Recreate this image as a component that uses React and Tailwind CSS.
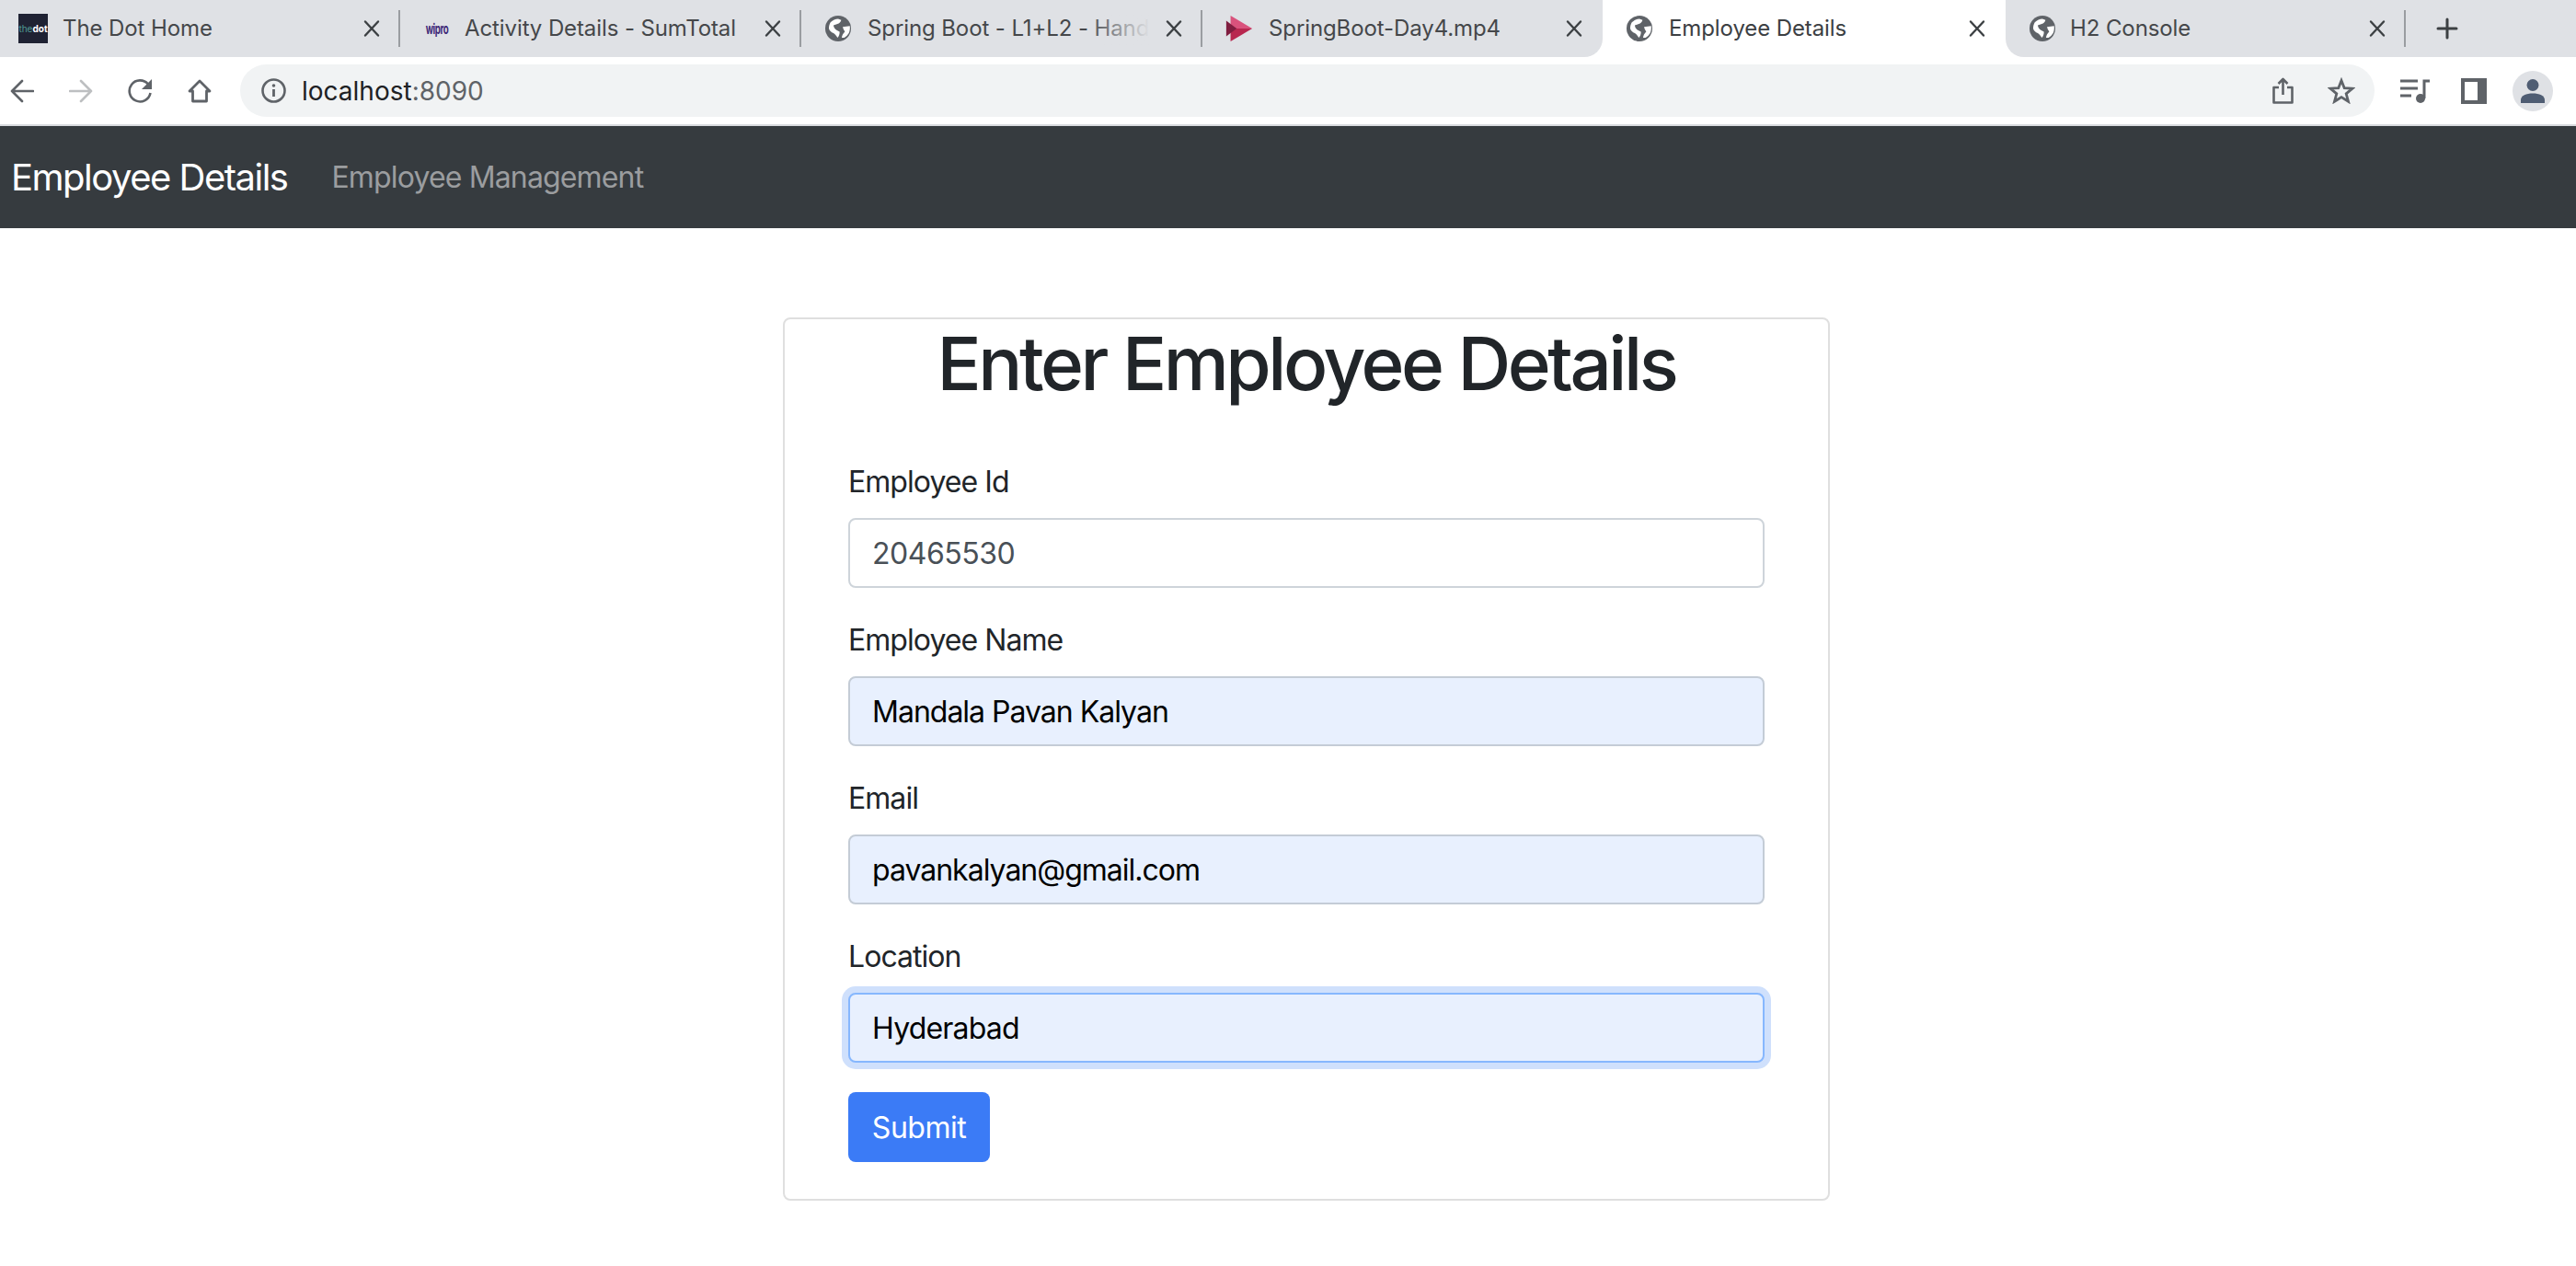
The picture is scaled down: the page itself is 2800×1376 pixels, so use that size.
import React from 'react'

const font = "font-['Inter','Liberation_Sans',sans-serif]"

function Globe() {
  return (
    <svg width="28" height="28" viewBox="0 0 24 24">
      <circle cx="12" cy="12" r="12" fill="#5f6368" />
      <path d="M4.9 6.3C7 4.2 9.5 3 12 2.9L14.9 4C14.5 6 13 7.2 11.4 7.7L7.7 9.1C7.8 11 9 12.8 10.6 13.4L13.4 14.9C13.6 17 12.8 19 11.4 20.6C10.5 18.8 9.2 17.4 7.7 16.3C5.6 15.5 4 14 3.4 12C3.4 9.8 4 8 4.9 6.3Z" fill="#fff" />
      <path d="M16.3 10.6L22.9 9.7C23.2 12 22.9 14.3 22 16.3C20.8 18.2 19.4 19.7 17.7 20.6L15.4 20.6C15.6 18.4 16.6 16.4 18.3 14.9C17.4 13.6 16.6 12.2 16.3 10.6Z" fill="#fff" />
    </svg>
  )
}

function DotIcon() {
  return (
    <div className="w-8 h-8 bg-[#1f2233] flex items-center justify-center text-[10px] leading-none font-bold">
      <span className="text-[#4f9a94] font-normal">the</span>
      <span className="text-white">dot</span>
    </div>
  )
}

function WiproIcon() {
  return (
    <div className="w-8 flex justify-center text-[#3f2a78] text-[15px] font-bold leading-none tracking-tighter scale-x-[0.65]">
      wipro
    </div>
  )
}

function StreamIcon() {
  return (
    <svg width="34" height="32" viewBox="0 0 34 32">
      <polygon points="7,1 32,16 7,16" fill="#d9527c" />
      <polygon points="7,31 32,16 7,16" fill="#b8274f" />
      <polygon points="2,7 14,16 2,25" fill="#7f1d3f" />
    </svg>
  )
}

function CloseIcon() {
  return (
    <svg width="22" height="22" viewBox="0 0 22 22" className="shrink-0" stroke="#3c4043" strokeWidth="2.4" strokeLinecap="round">
      <path d="M4 3.5L18 18.5M18 3.5L4 18.5" />
    </svg>
  )
}

function Tab({ icon, title, active, sep, fade, className, titleClass = 'ml-4' }) {
  return (
    <div className={`flex items-center h-full shrink-0 pl-6 ${active ? 'bg-white text-[#3c4043]' : 'bg-[#dfe1e5] text-[#45474a]'} ${className}`}>
      <div className="w-8 flex justify-center shrink-0">{icon}</div>
      <div className={`relative flex-1 mr-[15px] overflow-hidden whitespace-nowrap text-[24px] tracking-[-0.1px] ${titleClass}`}>
        {title}
        {fade && <div className="absolute inset-y-0 right-0 w-[70px] bg-gradient-to-r from-transparent to-[#dfe1e5]" />}
      </div>
      <CloseIcon />
      {sep ? <div className="ml-[18px] w-[2px] h-10 bg-[#9a9da1] shrink-0" /> : <div className="ml-5 w-0" />}
    </div>
  )
}

function TabStrip() {
  return (
    <div className="flex h-[62px]">
      <Tab className="w-[435px] !pl-5" icon={<DotIcon />} title="The Dot Home" sep />
      <Tab className="w-[436px]" titleClass="ml-[14px]" icon={<WiproIcon />} title="Activity Details - SumTotal" sep />
      <Tab className="w-[436px]" icon={<Globe />} title="Spring Boot - L1+L2 - Hands-on" fade sep />
      <Tab className="w-[435px] rounded-br-[20px]" icon={<StreamIcon />} title="SpringBoot-Day4.mp4" />
      <Tab className="w-[438px] rounded-t-[20px]" icon={<Globe />} title="Employee Details" active />
      <Tab className="w-[435px] rounded-bl-[20px]" titleClass="ml-[14px]" icon={<Globe />} title="H2 Console" sep />
      <div className="flex-1 bg-[#dfe1e5] flex items-center pl-[33px]">
        <svg width="24" height="24" viewBox="0 0 24 24" stroke="#3c4043" strokeWidth="3" strokeLinecap="round">
          <path d="M12 2V22M2 12H22" />
        </svg>
      </div>
    </div>
  )
}

function Toolbar() {
  return (
    <div className="flex items-center h-[73px] pl-[11px] border-b-2 border-[#dadce0] box-content">
      <div className="flex items-center gap-[38px]">
        <svg width="26" height="26" viewBox="0 0 26 26" fill="none" stroke="#5f6368" strokeWidth="2.6" strokeLinecap="round" strokeLinejoin="round">
          <path d="M25 13H2M13 2L2 13L13 24" />
        </svg>
        <svg width="26" height="26" viewBox="0 0 26 26" fill="none" stroke="#bdbfc1" strokeWidth="2.6" strokeLinecap="round" strokeLinejoin="round">
          <path d="M1 13H24M13 2L24 13L13 24" />
        </svg>
        <svg width="27" height="26" viewBox="0 0 27 26" fill="none">
          <path d="M22 5.5A11.5 11.5 0 1 0 24.5 15" stroke="#5f6368" strokeWidth="2.6" />
          <path d="M26 0V11H15Z" fill="#5f6368" />
        </svg>
        <svg width="26" height="26" viewBox="0 0 26 26" fill="none" stroke="#5f6368" strokeWidth="2.8" strokeLinejoin="round">
          <path d="M13 2L24 13H20.5V24H5.5V13H2Z" />
        </svg>
      </div>
      <div className="ml-[31px] w-[2320px] h-[57px] rounded-full bg-[#f1f3f4] flex items-center pl-[23px] pr-[21px]">
        <svg width="27" height="27" viewBox="0 0 27 27" fill="none">
          <circle cx="13.5" cy="13.5" r="12" stroke="#5f6368" strokeWidth="2.6" />
          <path d="M13.5 12V20" stroke="#5f6368" strokeWidth="2.8" />
          <circle cx="13.5" cy="8" r="1.8" fill="#5f6368" />
        </svg>
        <div className="ml-[17px] text-[28px] text-[#202124]">
          localhost<span className="text-[#5f6368]">:8090</span>
        </div>
        <div className="ml-auto flex items-center gap-[37px]">
          <svg width="23" height="29" viewBox="0 0 23 29" fill="none" stroke="#5f6368" strokeWidth="2.6" strokeLinejoin="round">
            <path d="M7 11H1.5V27.5H21.5V11H16" />
            <path d="M11.5 19V2M6.5 7L11.5 2L16.5 7" />
          </svg>
          <svg width="30" height="29" viewBox="0 0 30 29" fill="none" stroke="#5f6368" strokeWidth="2.8" strokeLinejoin="miter">
            <path d="M15 3.5L18.2 11.7L27 12.2L20.2 17.8L22.5 26.3L15 21.6L7.5 26.3L9.8 17.8L3 12.2L11.8 11.7Z" />
          </svg>
        </div>
      </div>
      <div className="ml-7 flex items-center">
        <svg width="32" height="26" viewBox="0 0 32 26" fill="none">
          <path d="M0 2H19M0 10H19M0 18H12" stroke="#5f6368" strokeWidth="3" />
          <path d="M26 21V2H32" stroke="#5f6368" strokeWidth="3" />
          <circle cx="22" cy="21" r="5" fill="#5f6368" />
        </svg>
        <div className="ml-[34px] w-7 h-7 border-4 border-r-[10px] border-[#5f6368] bg-white" />
        <div className="ml-7 w-11 h-11 rounded-full bg-[#dfe1e5] flex items-center justify-center">
          <svg width="26" height="26" viewBox="0 0 26 26" fill="#4f5d73">
            <circle cx="13" cy="6.5" r="6.5" />
            <path d="M0 26V22.5C0 18 6 15.5 13 15.5S26 18 26 22.5V26Z" />
          </svg>
        </div>
      </div>
    </div>
  )
}

function Field({ label, value, filled, focused }) {
  let inputClass = 'border-[#ced4da] bg-white text-[#495057] tracking-[-0.5px]'
  if (filled) inputClass = 'border-[#c4ccd6] bg-[#e8f0fe] text-black tracking-[-1px]'
  if (focused) inputClass = 'border-[#86b7fe] bg-[#e8f0fe] text-black tracking-[-0.8px] ring-[7px] ring-[#cfe0fc]'
  return (
    <div className="mb-8">
      <label className="block text-[32px] leading-[50px] mb-[14px] tracking-[-0.95px] text-[#212529]">{label}</label>
      <input
        readOnly
        value={value}
        className={`block w-full h-[76px] px-6 border-2 rounded-lg text-[32px] outline-none ${inputClass}`}
      />
    </div>
  )
}

export default function App() {
  return (
    <div className={`w-[2800px] h-[1376px] overflow-hidden bg-white ${font}`}>
      <TabStrip />
      <Toolbar />
      <nav className="h-[111px] bg-[#363b3f] flex items-center pl-3">
        <span className="text-[40px] text-white tracking-[-1.5px]">Employee Details</span>
        <span className="ml-12 text-[32px] text-[#9b9d9f] tracking-[-0.85px]">Employee Management</span>
      </nav>
      <div className="ml-[851px] mt-[97px] w-[1138px] h-[960px] border-2 border-[#dfdfdf] rounded-lg px-[69px]">
        <h1 className="text-[80px] leading-[96px] font-[540] text-center text-[#212529] tracking-[-3.45px] mb-10 mt-0">Enter Employee Details</h1>
        <div className="pt-4">
          <Field label="Employee Id" value="20465530" />
          <Field label="Employee Name" value="Mandala Pavan Kalyan" filled />
          <Field label="Email" value="pavankalyan@gmail.com" filled />
          <Field label="Location" value="Hyderabad" focused />
          <button className="h-[76px] w-[154px] pt-0.5 rounded-lg bg-[#3b7bf6] text-white text-[32px] tracking-[-0.5px]">Submit</button>
        </div>
      </div>
    </div>
  )
}
